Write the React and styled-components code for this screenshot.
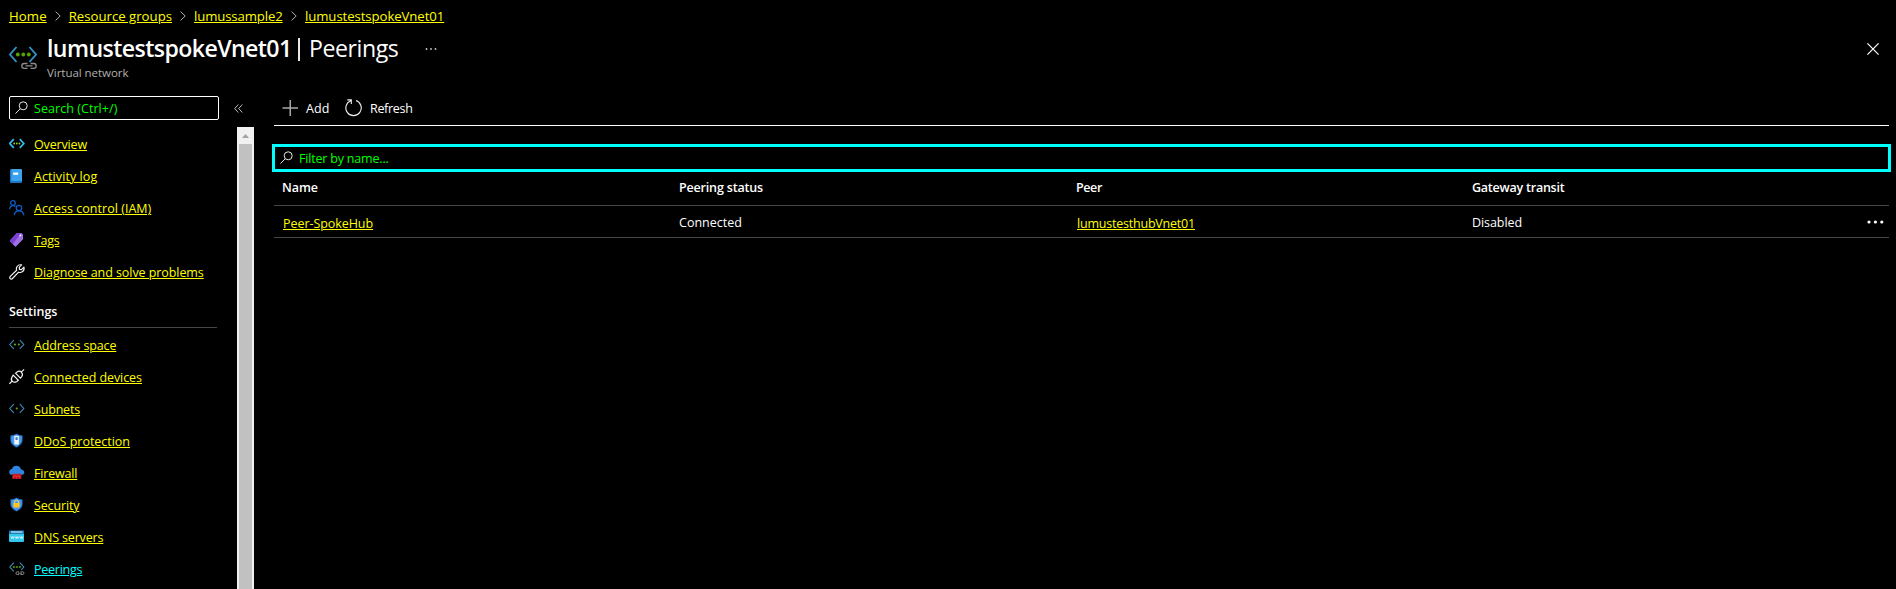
import React from "react";
import styled, { createGlobalStyle } from "styled-components";

const GlobalStyle = createGlobalStyle`
  * { box-sizing: border-box; }
  body { margin: 0; background: #000; overflow: hidden; }
`;

const Page = styled.div`
  width: 100%;
  height: 100vh;
  display: flex;
  flex-direction: column;
  background: #000;
  color: #fff;
  font-family: "Open Sans", "Noto Sans", sans-serif;
  font-size: 12.5px;
  line-height: 20px;
  white-space: nowrap;
  overflow: hidden;
`;

const Label = styled.span`
  padding-top: 2px;
  letter-spacing: ${(p) => p.$track || 0}px;
`;

const Link = styled.a`
  padding-top: 2px;
  color: ${(p) => (p.$active ? "#0ff" : "#ff0")};
  letter-spacing: ${(p) => p.$track || 0}px;
  text-decoration: underline;
  text-decoration-thickness: 1px;
  text-underline-offset: 1px;
  cursor: pointer;
`;

/* ---------- header ---------- */

const Breadcrumb = styled.nav`
  display: flex;
  align-items: center;
  height: 26px;
  padding: 6px 0 0 9px;
  font-size: 13.2px;
  flex: none;
`;

const Crumb = styled.div`
  display: flex;
  align-items: center;
  width: ${(p) => p.$width}px;
  justify-content: space-between;
`;

const CrumbLink = styled(Link)`
  padding-top: 0;
`;

const CrumbArrow = styled.svg`
  width: 6px;
  height: 10px;
  margin-right: 8px;
`;

const Header = styled.header`
  display: flex;
  height: 70px;
  padding: 6px 17px 0 8px;
  flex: none;
`;

const HeaderIcon = styled.svg`
  width: 30px;
  height: 26px;
  margin: 13px 9px 0 0;
`;

const Titles = styled.div`
  flex: 1;
`;

const TitleLine = styled.div`
  display: flex;
  align-items: center;
  height: 32px;
  line-height: 32px;
  font-size: 23.1px;
`;

const Title = styled.h1`
  margin: 0;
  width: 244px;
  font-size: inherit;
  font-weight: 600;
  letter-spacing: -0.57px;
`;

const TitleDivider = styled.span`
  width: 2px;
  height: 23px;
  margin: 2px 9px 0 7px;
  background: #e8e8e8;
`;

const TitleSection = styled.span`
  width: 90px;
  letter-spacing: -0.42px;
`;

const TitleDots = styled.svg`
  width: 12px;
  height: 4px;
  margin: 2px 0 0 26px;
`;

const Subtitle = styled.div`
  height: 16px;
  line-height: 17px;
  font-size: 11.5px;
  color: #b3b0ad;
  letter-spacing: -0.04px;
`;

const CloseIcon = styled.svg`
  width: 12px;
  height: 12px;
  margin-top: 11px;
`;

/* ---------- layout ---------- */

const Body = styled.div`
  flex: 1;
  display: flex;
  min-height: 0;
`;

const Sidebar = styled.aside`
  width: 254px;
  flex: none;
  display: flex;
  flex-direction: column;
`;

const SearchRow = styled.div`
  display: flex;
  align-items: center;
  height: 31px;
  padding: 0 0 7px 9px;
  flex: none;
`;

const SearchBox = styled.div`
  width: 210px;
  height: 24px;
  flex: none;
  display: flex;
  align-items: center;
  padding-left: 5px;
  border: 1px solid #fff;
  border-radius: 2px;
  color: #0f0;
`;

const SearchIcon = styled.svg`
  width: 13px;
  height: 13px;
  margin-right: 6px;
  margin-bottom: 1px;
  flex: none;
`;

const CollapseIcon = styled.svg`
  width: 9px;
  height: 9px;
  margin-left: 15px;
`;

const MenuArea = styled.div`
  flex: 1;
  display: flex;
  min-height: 0;
`;

const Menu = styled.div`
  flex: 1;
  padding: 1px 20px 0 9px;
  overflow: hidden;
`;

const MenuItem = styled.div`
  display: flex;
  align-items: center;
  height: 32px;
`;

const MenuIcon = styled.svg`
  width: 16px;
  height: 16px;
  margin-right: 9px;
  flex: none;
`;

const MenuHeading = styled.div`
  height: 40px;
  margin-bottom: 1px;
  padding-top: 14px;
  border-bottom: 1px solid #484644;
  font-weight: 600;
`;

const Scrollbar = styled.div`
  width: 17px;
  background: #f1f1f1;
  display: flex;
  flex-direction: column;
`;

const ScrollButton = styled.div`
  height: 17px;
  display: flex;
  align-items: center;
  justify-content: center;
`;

const ScrollThumb = styled.div`
  flex: 1;
  margin: 0 2px;
  background: #c1c1c1;
`;

const Main = styled.main`
  flex: 1;
  min-width: 0;
  padding: 0 7px 0 20px;
`;

const Toolbar = styled.div`
  display: flex;
  height: 30px;
  padding-left: 8px;
  border-bottom: 1px solid #fff;
`;

const ToolButton = styled.div`
  display: flex;
  align-items: center;
  height: 24px;
  width: ${(p) => p.$width}px;
`;

const ToolIcon = styled.svg`
  width: 17px;
  height: 18px;
  margin: 0 ${(p) => p.$gap}px 1px 0;
`;

const FilterBox = styled.div`
  display: flex;
  align-items: center;
  height: 28px;
  margin: 18px -2px 0;
  padding-left: 5px;
  border: 3px solid #0ff;
  color: #0f0;
`;

const TableRow = styled.div`
  display: grid;
  grid-template-columns: 397px 397px 396px 1fr 14px;
  height: ${(p) => (p.$head ? 34 : 32)}px;
  padding: ${(p) => (p.$head ? "4px 6px 0 8px" : "5px 6px 0 8px")};
  border-bottom: 1px solid #484644;
  font-weight: ${(p) => (p.$head ? 600 : 400)};
`;

const LinkCell = styled.div`
  display: flex;
  padding: 1px 0 0 1px;
`;

const RowDots = styled.svg`
  width: 17px;
  height: 4px;
  margin: 9px 0 0 -2px;
`;

/* ---------- icons ---------- */

const Magnifier = () => (
  <SearchIcon viewBox="0 0 13 13" fill="none" stroke="#e6e6e6" strokeWidth="1">
    <circle cx="8.2" cy="4.8" r="4" />
    <path d="M5.3 7.7 0.5 12.5" />
  </SearchIcon>
);

const Brackets = ({ dots, color = "#3a8fbc", dot = "#5ea51a", bold }) => (
  <MenuIcon viewBox="0 0 16 16" fill="none" stroke={color} strokeWidth={bold ? 1.7 : 1.1}>
    <path d="M4.8 3.200.8 7.500l4 4.300M10.800 3.200 14.800 7.500l-4 4.300" />
    {dots.map((x) => (
      <circle key={x} cx={x} cy="7.5" r={bold ? 0.9 : 1.1} fill={dot} stroke="none" />
    ))}
  </MenuIcon>
);

const shield = "M7.5.6C9.4 2 11.3 2.4 13.6 2.4V7c0 3.6-3 5.800-6.100 7.600C4.400 12.800 1.400 10.600 1.400 7V2.400C3.700 2.400 5.600 2 7.500.6Z";
const shieldFace = "M7.5 1.700c1.600 1 3.200 1.400 5.100 1.500V7c0 3-2.500 4.900-5.100 6.400C4.900 11.900 2.400 10 2.400 7V3.200C4.300 3.100 5.900 2.700 7.500 1.700Z";

const icons = {
  overview: <Brackets bold color="#32bdf0" dot="#86d633" dots={[5.2, 7.8, 10.4]} />,
  address: <Brackets dots={[6, 9.8]} />,
  subnets: <Brackets dots={[7.8]} />,
  log: (
    <MenuIcon viewBox="0 0 16 16">
      <path d="M1 1.500H12a1 1 0 0 1 1 1V14a1 1 0 0 1-1 1H2a1 1 0 0 1-1-1Z" fill="#1976c4" />
      <path d="M2.300 1H12a1 1 0 0 1 1 1V13H2.300Z" fill="#3ba3ee" />
      <rect x="4.200" y="4.600" width="5" height="2.200" fill="#fff" />
    </MenuIcon>
  ),
  iam: (
    <MenuIcon viewBox="0 0 16 16" fill="none" stroke="#0f5bc4" strokeWidth="1.300">
      <circle cx="4" cy="3" r="2.300" />
      <path d="M.6 9.300C.8 7 2 5.700 4 5.700c1.200 0 1.900.4 2.500 1" />
      <circle cx="10" cy="8" r="2.700" />
      <path d="M5.300 15.300c.2-2.800 2-4.400 4.700-4.400s4.500 1.600 4.900 4.400" />
    </MenuIcon>
  ),
  tags: (
    <MenuIcon viewBox="0 0 16 16">
      <path d="M7.800.9H12.300L14 2.800V7L7.300 14.100a1 1 0 0 1-1.400.1L1.200 9.600a1 1 0 0 1-.1-1.400Z" fill="#8f5cd6" />
      <path d="M7.800.9H12.300L3.600 11.900 1.200 9.600a1 1 0 0 1-.1-1.400Z" fill="#7b40d2" />
      <path d="M12.300.9 14 2.800V7L7.300 14.100a1 1 0 0 1-1.400.1L3.900 12.200Z" fill="#9d6fe0" />
      <circle cx="11.300" cy="3.400" r=".9" fill="#fff" />
    </MenuIcon>
  ),
  wrench: (
    <MenuIcon viewBox="0 0 16 16" fill="none" stroke="#f2f2f2" strokeWidth="1.200" strokeLinejoin="round">
      <path d="M12.600.9 10.200 3.300l.3 2 2 .3L14.900 3.200c.5 2-.2 3.700-1.600 4.600-1.200.8-2.600.8-3.700.4L3.500 14.500c-.8.8-1.700.7-2.300.1s-.7-1.500.1-2.300L7.600 6.200c-.4-1.200-.3-2.500.5-3.700C9 1.200 10.700.5 12.600.9Z" />
    </MenuIcon>
  ),
  plug: (
    <MenuIcon viewBox="0 0 16 16" fill="none" stroke="#f2f2f2" strokeWidth="1.200">
      <path d="M.4 14.800 3.100 12.100M12.300 3.200 15.100.4" />
      <path d="M4.200 6.200 9.300 11.300 7.900 12.400C6.200 13.400 4.400 13.400 3.300 12.300S2.200 9.300 3.200 7.700ZM6.500 4.200 11.400 9.100 12.700 7.600c1-1.500.9-3.200-.2-4.300S9.700 1.900 8.100 2.900Z" />
    </MenuIcon>
  ),
  ddos: (
    <MenuIcon viewBox="0 0 16 16">
      <path d={shield} fill="#1f6fd0" />
      <path d={shieldFace} fill="#4a9bea" />
      <rect x="5.300" y="2.800" width="4.600" height="8.600" rx=".5" fill="#f4f4f4" />
      <rect x="6.500" y="4.200" width="2.200" height="2.800" fill="#3f7fc8" />
    </MenuIcon>
  ),
  firewall: (
    <MenuIcon viewBox="0 0 16 16">
      <path d="M3.600 9.800A3 3 0 0 1 .2 7c0-1.700 1.200-2.800 2.800-3C3.600 2 5.300.8 7.400.8c2.400 0 4.200 1.500 4.700 3.700C14 4.700 15.300 5.900 15.300 7.400S14 9.900 12.200 9.900Z" fill="#2e84e0" />
      <rect x="3.300" y="8.800" width="9" height="5" fill="#c4161c" />
      <path d="M3.300 11.300h9M6 8.800v2.500M9.200 8.800v2.500M7.600 11.300v2.500M4.600 11.300v2.500M10.800 11.300v2.500" stroke="#e8505a" strokeWidth=".4" />
    </MenuIcon>
  ),
  security: (
    <MenuIcon viewBox="0 0 16 16">
      <path d={shield} fill="#1f6fd0" />
      <path d={shieldFace} fill="#4a9bea" />
      <path d="M5.500 6.200V5.100a2 2 0 0 1 4 0v1.100" fill="none" stroke="#ffd95a" strokeWidth="1" />
      <rect x="4.400" y="5.900" width="6.200" height="4.600" rx=".5" fill="#ffc51a" />
    </MenuIcon>
  ),
  dns: (
    <MenuIcon viewBox="0 0 16 16">
      <path d="M0 1.500h15v3H0Z" fill="#0f78c8" />
      <path d="M2 2.500h11.500v1H2Z" fill="#fff" />
      <path d="M0 4.500h15v7.500a1 1 0 0 1-1 1H1a1 1 0 0 1-1-1Z" fill="#32c8ee" />
      <path d="m2 7.500.8 2 .8-2 .8 2 .8-2m1.200 0 .8 2 .8-2 .8 2 .8-2m1.200 0 .8 2 .8-2 .8 2 .8-2" fill="none" stroke="#fff" strokeWidth=".7" />
    </MenuIcon>
  ),
  peerings: (
    <MenuIcon viewBox="0 0 16 16" fill="none" stroke="#3a8fbc" strokeWidth="1.100">
      <path d="M4.800 1.700.8 6l4 4.300M10.800 1.700 14.800 6l-2.600 2.800" />
      <path d="M3.800 6h8" stroke="#5ea51a" strokeWidth="1.600" strokeDasharray="2 1" />
      <path d="M10 10.800H8.300a1.300 1.300 0 0 0 0 2.700H10M11.500 10.800H13.600a1.300 1.300 0 0 1 0 2.700H11.500M9 12.200h4" stroke="#8a8a8a" strokeWidth="1" />
    </MenuIcon>
  ),
};

const crumbs = [
  { text: "Home", width: 59.7, track: 0.1 },
  { text: "Resource groups", width: 125.3, track: 0 },
  { text: "lumussample2", width: 111, track: -0.13 },
  { text: "lumustestspokeVnet01", track: -0.08 },
];

const general = [
  { text: "Overview", icon: "overview", track: -0.15 },
  { text: "Activity log", icon: "log", track: 0.08 },
  { text: "Access control (IAM)", icon: "iam", track: 0.03 },
  { text: "Tags", icon: "tags", track: -0.3 },
  { text: "Diagnose and solve problems", icon: "wrench", track: -0.07 },
];

const settings = [
  { text: "Address space", icon: "address", track: -0.13 },
  { text: "Connected devices", icon: "plug", track: -0.07 },
  { text: "Subnets", icon: "subnets", track: -0.18 },
  { text: "DDoS protection", icon: "ddos", track: -0.02 },
  { text: "Firewall", icon: "firewall", track: -0.17 },
  { text: "Security", icon: "security", track: -0.15 },
  { text: "DNS servers", icon: "dns", track: -0.15 },
  { text: "Peerings", icon: "peerings", track: -0.24, active: true },
];

const columns = [
  { text: "Name", track: -0.04 },
  { text: "Peering status", track: -0.17 },
  { text: "Peer", track: -0.4 },
  { text: "Gateway transit", track: -0.23 },
];

const MenuList = ({ items }) =>
  items.map((item) => (
    <MenuItem key={item.text}>
      {icons[item.icon]}
      <Link $track={item.track} $active={item.active}>{item.text}</Link>
    </MenuItem>
  ));

export default function App() {
  return (
    <Page>
      <GlobalStyle />
      <Breadcrumb>
        {crumbs.map((c, i) => (
          <Crumb key={c.text} $width={c.width}>
            <CrumbLink $track={c.track}>{c.text}</CrumbLink>
            {i < crumbs.length - 1 && (
              <CrumbArrow viewBox="0 0 6 10" fill="none" stroke="#b0b0b0">
                <path d="M.6.6 5.200 5 .6 9.400" />
              </CrumbArrow>
            )}
          </Crumb>
        ))}
      </Breadcrumb>
      <Header>
        <HeaderIcon viewBox="0 0 30 26" fill="none">
          <path d="M8.500 2 2 9.500l6.500 7.500M21.500 2 28 9.500l-6.500 7.500" stroke="#3391c4" strokeWidth="1.900" />
          <g fill="#57a300">
            <circle cx="9.800" cy="9.500" r="1.900" />
            <circle cx="15.300" cy="9.500" r="1.900" />
            <circle cx="20.800" cy="9.500" r="1.900" />
          </g>
          <path d="M19.500 18.500h-3.300a2.400 2.400 0 0 0 0 4.800h3.300M22.500 18.500h3.300a2.400 2.400 0 0 1 0 4.800h-3.300M17.500 20.900h7" stroke="#8c8c8c" strokeWidth="1.300" />
        </HeaderIcon>
        <Titles>
          <TitleLine>
            <Title>lumustestspokeVnet01</Title>
            <TitleDivider />
            <TitleSection>Peerings</TitleSection>
            <TitleDots viewBox="0 0 12 4" fill="#c8c8c8">
              <circle cx="1.500" cy="2" r=".9" />
              <circle cx="6" cy="2" r=".9" />
              <circle cx="10.500" cy="2" r=".9" />
            </TitleDots>
          </TitleLine>
          <Subtitle>Virtual network</Subtitle>
        </Titles>
        <CloseIcon viewBox="0 0 12 12" stroke="#fff" strokeWidth="1.200">
          <path d="M.4.4 11.600 11.600M11.600.4.4 11.600" />
        </CloseIcon>
      </Header>
      <Body>
        <Sidebar>
          <SearchRow>
            <SearchBox>
              <Magnifier />
              <Label $track={0.06}>Search (Ctrl+/)</Label>
            </SearchBox>
            <CollapseIcon viewBox="0 0 9 9" fill="none" stroke="#b8b8b8">
              <path d="M4.300.5.7 4.500l3.600 4M8.300.5 4.700 4.500l3.600 4" />
            </CollapseIcon>
          </SearchRow>
          <MenuArea>
            <Menu>
              <MenuList items={general} />
              <MenuHeading>Settings</MenuHeading>
              <MenuList items={settings} />
            </Menu>
            <Scrollbar>
              <ScrollButton>
                <svg width="7" height="4" viewBox="0 0 7 4">
                  <path d="M0 4 3.500 0 7 4Z" fill="#a3a3a3" />
                </svg>
              </ScrollButton>
              <ScrollThumb />
            </Scrollbar>
          </MenuArea>
        </Sidebar>
        <Main>
          <Toolbar>
            <ToolButton $width={62.5}>
              <ToolIcon $gap={7} viewBox="0 0 17 18" stroke="#a8a8a8" strokeWidth="1.500">
                <path d="M.5 9H16M8.250 1v16" />
              </ToolIcon>
              <Label $track={0.08}>Add</Label>
            </ToolButton>
            <ToolButton>
              <ToolIcon $gap={8.5} viewBox="0 0 17 18" fill="none" stroke="#f0f0f0" strokeWidth="1.100">
                <path d="M11 1.600A7.700 7.700 0 1 1 5.800 1.700M2.300.9H6.300V5" />
              </ToolIcon>
              <Label $track={-0.31}>Refresh</Label>
            </ToolButton>
          </Toolbar>
          <FilterBox>
            <Magnifier />
            <Label $track={-0.19}>Filter by name...</Label>
          </FilterBox>
          <TableRow $head>
            {columns.map((c) => (
              <Label key={c.text} $track={c.track}>{c.text}</Label>
            ))}
          </TableRow>
          <TableRow>
            <LinkCell><Link $track={-0.06}>Peer-SpokeHub</Link></LinkCell>
            <Label $track={0.02}>Connected</Label>
            <LinkCell><Link $track={-0.21}>lumustesthubVnet01</Link></LinkCell>
            <Label $track={-0.07}>Disabled</Label>
            <RowDots viewBox="0 0 17 4" fill="#fff">
              <circle cx="2" cy="2" r="1.600" />
              <circle cx="8.400" cy="2" r="1.600" />
              <circle cx="14.800" cy="2" r="1.600" />
            </RowDots>
          </TableRow>
        </Main>
      </Body>
    </Page>
  );
}
